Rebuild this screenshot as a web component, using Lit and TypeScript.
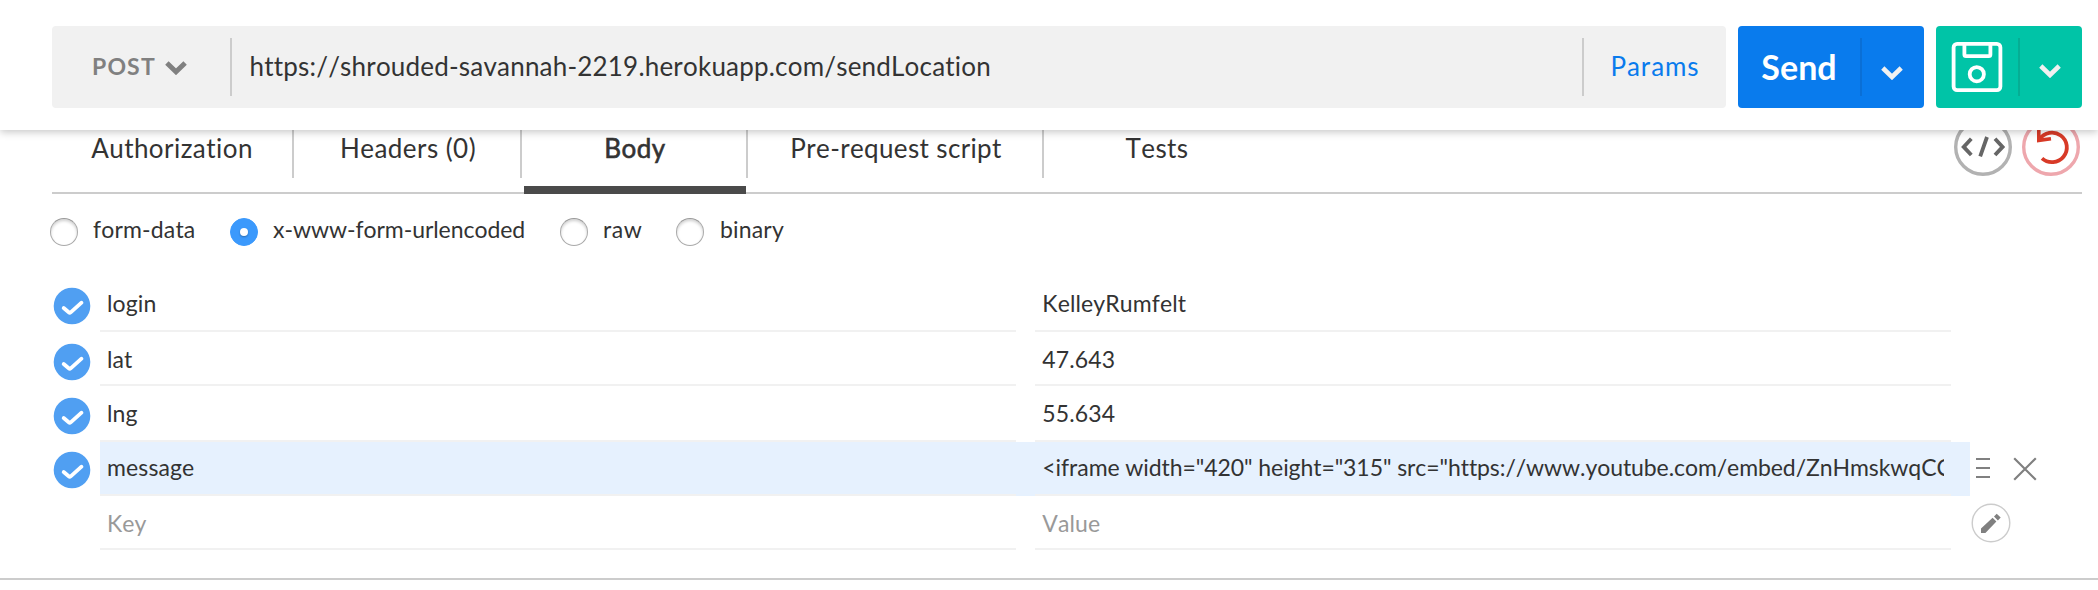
import { LitElement, html, css, svg } from "lit";
import { customElement, property } from "lit/decorators.js";
import { classMap } from "lit/directives/class-map.js";

interface Param { key: string; value: string; on: boolean; active?: boolean; tall?: boolean; low?: boolean }

const PARAMS: Param[] = [
  { key: "login", value: "KelleyRumfelt", on: true },
  { key: "lat", value: "47.643", on: true, low: true },
  { key: "lng", value: "55.634", on: true, tall: true, low: true },
  { key: "message", value: '<iframe width="420" height="315" src="https://www.youtube.com/embed/ZnHmskwqCCQ" frameborder="0"></iframe>', on: true, active: true },
  { key: "Key", value: "Value", on: false, low: true },
];

@customElement("request-bar")
export class RequestBar extends LitElement {
  static styles = css`
    :host { display: block; box-sizing: border-box; height: 130px; padding: 26px 16px 0 52px; background: #fff;
      position: relative; z-index: 1; box-shadow: 0 2px 8px rgba(0,0,0,.23); }
    .row { display: flex; gap: 12px; height: 82px; }
    .bar { flex: 1; display: flex; align-items: center; background: #f1f1f1; border-radius: 4px; }
    .rule { width: 2px; height: 58px; background: #ccc; }
    .method { width: 178px; box-sizing: border-box; padding-left: 40px; display: flex; align-items: center; gap: 9px;
      font-size: 23px; font-weight: 700; color: #808080; letter-spacing: 1.15px; }
    .method span { padding-bottom: 2px; }
    .method svg { margin-top: 2px; }
    .url { flex: 1; padding: 0 0 2px 17.5px; font-size: 26px; color: #333; letter-spacing: .2px; }
    .params { width: 142px; padding-bottom: 2px; text-align: center; font-size: 26px; color: #097bed; letter-spacing: .9px; }
    .btn { display: flex; align-items: center; border-radius: 4px; }
    .send { width: 186px; background: #097bed; }
    .save { width: 146px; background: #00c4a7; }
    .label { width: 122px; padding-bottom: 2px; text-align: center; color: #fff; font-size: 34px; font-weight: 700; }
    .disk { width: 82px; display: flex; justify-content: center; }
    .send .rule { background: #0a6fd6; }
    .save .rule { background: #05ae94; }
    .more { flex: 1; display: flex; justify-content: center; padding-right: 1.5px; }
    .send .more { padding-top: 11px; }
    .save .more { padding-top: 7px; }
    svg { display: block; }
  `;
  render() {
    const arrow = svg`<path d="M1.8 2 L11 11 L20.2 2" fill="none" stroke="#f1f1f1" stroke-width="4.6"/>`;
    return html`<div class="row">
      <div class="bar">
        <div class="method"><span>POST</span><svg width="22" height="14" viewBox="0 0 22 14"><path d="M1.9 2 L11 10.8 L20.1 2" fill="none" stroke="#808080" stroke-width="4.9"/></svg></div>
        <div class="rule"></div>
        <div class="url">https://shrouded-savannah-2219.herokuapp.com/sendLocation</div>
        <div class="rule"></div>
        <div class="params">Params</div>
      </div>
      <div class="btn send"><div class="label">Send</div><div class="rule"></div><div class="more"><svg width="22" height="14" viewBox="0 0 22 14">${arrow}</svg></div></div>
      <div class="btn save">
        <div class="disk"><svg width="52" height="52" viewBox="0 0 52 52" fill="none" stroke="#fff" stroke-width="3.8"><rect x="2.6" y="2.9" width="46.8" height="46.2" rx="3.5"/><path d="M13.4 3v10.5q0 1.6 1.6 1.6h22.8q1.6 0 1.6-1.6V3"/><circle cx="25.8" cy="33.2" r="7.1"/></svg></div>
        <div class="rule"></div><div class="more"><svg width="22" height="14" viewBox="0 0 22 14">${arrow}</svg></div>
      </div>
    </div>`;
  }
}

@customElement("request-tabs")
export class RequestTabs extends LitElement {
  static styles = css`
    :host { display: block; padding: 0 16px 0 52px; }
    .tabs { display: flex; height: 64px; box-sizing: border-box; border-bottom: 2px solid #ccc; color: #333; font-size: 26px; letter-spacing: .45px; }
    .tab { box-sizing: border-box; height: 48px; padding-top: 2px; line-height: 32px; text-align: center; border-right: 2px solid #ccc; }
    .auth { width: 242px; } .headers { width: 228px; padding-left: 2px; }
    .body { width: 226px; position: relative; padding-left: 2px; -webkit-text-stroke: .6px #333; }
    .pre { width: 296px; padding-left: 2px; letter-spacing: .36px; } .tests { width: 226px; border: 0; }
    .body::after { content: ""; position: absolute; left: 2px; right: 0; top: 56px; height: 8px; background: #4a4a4a; }
    .tools { margin: 0 2px 0 auto; display: flex; gap: 10px; }
    svg { display: block; margin-top: -12px; }
  `;
  render() {
    return html`<div class="tabs">
      <div class="tab auth">Authorization</div><div class="tab headers">Headers (0)</div><div class="tab body">Body</div>
      <div class="tab pre">Pre-request script</div><div class="tab tests">Tests</div>
      <div class="tools">
        <svg width="58" height="58" viewBox="0 0 58 58" fill="none"><circle cx="29" cy="29" r="27.3" stroke="#b2b2b2" stroke-width="3.4"/><path d="M17.3 20.8l-7.6 8.1 7.6 8.1M41 20.8l7.6 8.1-7.6 8.1M33 19l-6.8 19.4" stroke="#666" stroke-width="3.8"/></svg>
        <svg width="58" height="58" viewBox="0 0 58 58" fill="none"><circle cx="29" cy="29" r="27.3" stroke="#eea7ad" stroke-width="3.4"/><path d="M17.5 21.2A14.9 14.8 0 1 1 20 40.4" stroke="#d83a27" stroke-width="3.8"/><path d="M16.8 10v12.4l12.2-1.6" stroke="#d83a27" stroke-width="3.6"/></svg>
      </div>
    </div>`;
  }
}

@customElement("body-modes")
export class BodyModes extends LitElement {
  static styles = css`
    :host { display: flex; height: 76px; padding-left: 50px; padding-top: 19px; box-sizing: border-box; color: #333; font-size: 23px; line-height: 32px; letter-spacing: .17px; }
    .mode { display: flex; gap: 15px; }
    .dot { box-sizing: border-box; width: 28px; height: 28px; margin-top: 5px; border: 1px solid #aaa; border-top-color: #999; border-radius: 50%; box-shadow: inset 0 2px 3px rgba(0,0,0,.18); display: flex; align-items: center; justify-content: center; }
    .chosen { background: #3b99fc; border-color: #3b99fc; box-shadow: none; }
    .chosen::after { content: ""; width: 8px; height: 8px; border-radius: 50%; background: #fff; box-shadow: 0 1px 2px rgba(0,0,0,.3); }
    .a { width: 180px; } .b { width: 330px; letter-spacing: -.05px; } .c { width: 116px; letter-spacing: .5px; } .d { gap: 16px; }
  `;
  render() {
    return html`${[["a", "form-data"], ["b", "x-www-form-urlencoded"], ["c", "raw"], ["d", "binary"]].map(([c, t]) =>
      html`<div class="mode ${c}"><span class=${classMap({ dot: true, chosen: c === "b" })}></span><span>${t}</span></div>`)}`;
  }
}

@customElement("param-row")
export class ParamRow extends LitElement {
  @property({ attribute: false }) param!: Param;
  static styles = css`
    :host { display: block; }
    .row { display: flex; height: 54px; }
    .tall { height: 56px; }
    .check { width: 48px; padding-top: 9px; }
    .low .check { padding-top: 11px; }
    .fields { width: 1870px; box-sizing: border-box; padding-right: 19px; display: flex; gap: 19.6px; }
    .active .fields { background: #e6f1fe; }
    .field { flex: 1 1 0; min-width: 0; box-sizing: border-box; border-bottom: 2px solid #f1f1f1; padding: 9px 7px 0; font-size: 23px; line-height: 32px; color: #333; letter-spacing: .12px; }
    .low .field { padding-top: 11px; }
    .text { overflow: hidden; white-space: nowrap; }
    .active .value { letter-spacing: -.075px; }
    .blank { color: #999; }
    .tools { display: flex; }
    .sort { margin: 15px 0 0 6px; }
    .close { margin: 15px 0 0 23px; }
    .pencil { margin: 7px 0 0 1px; }
    svg { display: block; }
  `;
  render() {
    const p = this.param;
    return html`<div class=${classMap({ row: true, active: !!p.active, tall: !!p.tall, low: !!p.low })}>
      <div class="check">${p.on ? html`<svg width="40" height="38" viewBox="0 0 40 38"><circle cx="20" cy="19" r="18.3" fill="#509ff2"/><path d="M11.7 21l5 4.3q1 .8 2 0L29.5 15.7" fill="none" stroke="#fff" stroke-width="3.8" stroke-linecap="round"/></svg>` : ""}</div>
      <div class="fields">
        <div class="field"><div class=${classMap({ text: true, blank: !p.on })}>${p.key}</div></div>
        <div class="field"><div class=${classMap({ text: true, value: true, blank: !p.on })}>${p.value}</div></div>
      </div>
      <div class="tools">
        ${p.active ? html`<svg class="sort" width="14" height="22"><path d="M0 2h14M0 11h14M0 20h14" stroke="#808080" stroke-width="2"/></svg>
          <svg class="close" width="24" height="24"><path d="M1.2 1.2l21.6 21.6M22.8 1.2L1.2 22.8" stroke="#808080" stroke-width="2.2"/></svg>` : ""}
        ${!p.on ? html`<svg class="pencil" width="40" height="40" viewBox="0 0 40 40"><circle cx="20" cy="20" r="18.8" fill="#fff" stroke="#ccc" stroke-width="1.4"/><path d="M10 30v-4.4L21.6 14.8l3.8 3.8L14.4 30zM23 13.5l2.7-2.7 4 3.8-2.8 2.8z" fill="#808080"/></svg>` : ""}
      </div>
    </div>`;
  }
}

@customElement("app-root")
export class AppRoot extends LitElement {
  static styles = css`
    :host { display: block; box-sizing: border-box; width: 2098px; height: 590px; overflow: hidden; background: #fff;
      font-family: Lato, "Liberation Sans", sans-serif; font-kerning: none; font-variant-ligatures: none; }
    .params { box-sizing: border-box; height: 310px; padding: 8px 0 0 52px; border-bottom: 2px solid #ccc; }
  `;
  render() {
    return html`<request-bar></request-bar><request-tabs></request-tabs><body-modes></body-modes>
      <div class="params">${PARAMS.map((p) => html`<param-row .param=${p}></param-row>`)}</div>`;
  }
}
